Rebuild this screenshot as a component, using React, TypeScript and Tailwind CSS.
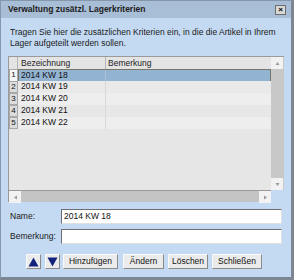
const rows = ["2014 KW 18", "2014 KW 19", "2014 KW 20", "2014 KW 21", "2014 KW 22"];

const rowBg = ["bg-[#93b3d3]", "bg-[#e9e9e9]", "bg-[#eeeeee]", "bg-[#e7e7e7]", "bg-[#eeeeee]"];

const Btn = ({ label, w }: { label: string; w: string }) => (
  <button
    className={`${w} h-[15px] flex items-center justify-center bg-[#ebebeb] border border-t-[#fafafa] border-l-[#fafafa] border-b-[#8a8a8a] border-r-[#8a8a8a] text-[8.5px] text-[#111]`}
  >
    {label}
  </button>
);

const ArrowBtn = ({ up }: { up?: boolean }) => (
  <button className="w-[15px] h-[15px] flex items-center justify-center bg-[#ebebeb] border border-t-[#fafafa] border-l-[#fafafa] border-b-[#8a8a8a] border-r-[#8a8a8a]">
    <svg width="11" height="10" viewBox="0 0 11 10">
      {up ? (
        <polygon points="5.5,0.5 10.5,9.5 0.5,9.5" fill="#13237d" />
      ) : (
        <polygon points="0.5,0.5 10.5,0.5 5.5,9.5" fill="#13237d" />
      )}
    </svg>
  </button>
);

const ScrollBtn = ({ dir }: { dir: "up" | "down" | "left" | "right" }) => (
  <div className="w-[12px] h-[12px] bg-[#f2f2f2] flex items-center justify-center">
    <svg width="5" height="5" viewBox="0 0 5 5">
      {dir === "up" && <polygon points="2.5,1 4.5,4 0.5,4" fill="#9a9a9a" />}
      {dir === "down" && <polygon points="0.5,1 4.5,1 2.5,4" fill="#9a9a9a" />}
      {dir === "left" && <polygon points="1,2.5 4,0.5 4,4.5" fill="#9a9a9a" />}
      {dir === "right" && <polygon points="4,2.5 1,0.5 1,4.5" fill="#9a9a9a" />}
    </svg>
  </div>
);

export default function App() {
  return (
    <div className="w-[294px] h-[280px] bg-white font-['Liberation_Sans',Arial,sans-serif]">
      <div className="w-[294px] h-[280px] flex flex-col bg-[#c4daf2] border border-[#8497ab] border-r-[3px] border-b-[3px] border-r-[#7d8793] border-b-[#7d8793]">
        <div className="h-[17px] shrink-0 bg-[#a8bdd6] flex items-center justify-between pl-[7px] pr-[5px]">
          <span className="text-[8.5px] font-bold text-[#1c1c1c]">Verwaltung zusätzl. Lagerkriterien</span>
          <div className="w-[11px] h-[10px] bg-[#d8d8d8] border border-[#6d6d6d] flex items-center justify-center text-[8px] font-bold leading-none text-black">
            ×
          </div>
        </div>

        <p className="mt-[9px] px-[9px] text-[8.5px] leading-[11px] text-[#1a1a1a]">
          Tragen Sie hier die zusätzlichen Kriterien ein, in die die Artikel in Ihrem Lager aufgeteilt werden sollen.
        </p>

        <div className="mt-[7px] ml-[7px] mr-[7px] flex flex-col">
          <div className="flex h-[134px]">
            <div className="flex-1 flex flex-col bg-[#e6e6e6] border-l border-t border-[#9a9a9a]">
              <div className="grid grid-cols-[9px_88px_1fr] h-[12px] text-[8.5px] text-[#222] leading-[12px]">
                <div className="bg-[#e4e4e4] border-r border-b border-[#b4b4b4]" />
                <div className="bg-[#e4e4e4] border-r border-b border-[#b4b4b4] pl-[3px]">Bezeichnung</div>
                <div className="bg-[#e4e4e4] border-b border-[#b4b4b4] pl-[2px]">Bemerkung</div>
              </div>
              {rows.map((r, i) => (
                <div key={i} className="grid grid-cols-[9px_88px_1fr] h-[12px] text-[8.5px] text-[#111] leading-[11px]">
                  <div
                    className={`${i === 0 ? "bg-[#f6f6f6]" : "bg-[#dcdcdc]"} border border-[#a8a8a8] text-center text-[8px] leading-[10px]`}
                  >
                    {i + 1}
                  </div>
                  {i === 0 ? (
                    <div className="col-span-2 flex bg-[#93b3d3] border border-[#777768]">
                      <div className="w-[87px] pl-[2px] border-r border-[#a8bfd6]">{r}</div>
                      <div className="flex-1" />
                    </div>
                  ) : (
                    <>
                      <div className={`${rowBg[i]} pl-[3px] border-r border-[#d8d8d8]`}>{r}</div>
                      <div className={rowBg[i]} />
                    </>
                  )}
                </div>
              ))}
            </div>
            <div className="w-[13px] flex flex-col justify-between bg-[#c8c8c8] border-t border-[#9a9a9a]">
              <ScrollBtn dir="up" />
              <ScrollBtn dir="down" />
            </div>
          </div>
          <div className="flex h-[12px]">
            <div className="flex-1 flex justify-between bg-[#c4c4c4] border-l border-t border-[#9a9a9a]">
              <ScrollBtn dir="left" />
              <ScrollBtn dir="right" />
            </div>
            <div className="w-[13px]" />
          </div>
        </div>

        <div className="mt-[7px] px-[9px] flex flex-col gap-[5px] text-[8.5px] text-[#1a1a1a]">
          <div className="flex items-center">
            <span className="w-[51px]">Name:</span>
            <div className="flex-1 h-[15px] bg-white border border-t-[#6e6e6e] border-l-[#6e6e6e] border-b-[#e0e0e0] border-r-[#e0e0e0] pl-[2px] leading-[13px] text-[#111]">
              2014 KW 18
            </div>
          </div>
          <div className="flex items-center">
            <span className="w-[51px]">Bemerkung:</span>
            <div className="flex-1 h-[15px] bg-white border border-t-[#6e6e6e] border-l-[#6e6e6e] border-b-[#e0e0e0] border-r-[#e0e0e0]" />
          </div>
        </div>

        <div className="mt-[10px] pl-[25px] flex items-center">
          <ArrowBtn up />
          <div className="ml-[4px]">
            <ArrowBtn />
          </div>
          <div className="ml-[3px]">
            <Btn label="Hinzufügen" w="w-[55px]" />
          </div>
          <div className="ml-[5px]">
            <Btn label="Ändern" w="w-[41px]" />
          </div>
          <div className="ml-[4px]">
            <Btn label="Löschen" w="w-[40px]" />
          </div>
          <div className="ml-[4px]">
            <Btn label="Schließen" w="w-[50px]" />
          </div>
        </div>
      </div>
    </div>
  );
}
